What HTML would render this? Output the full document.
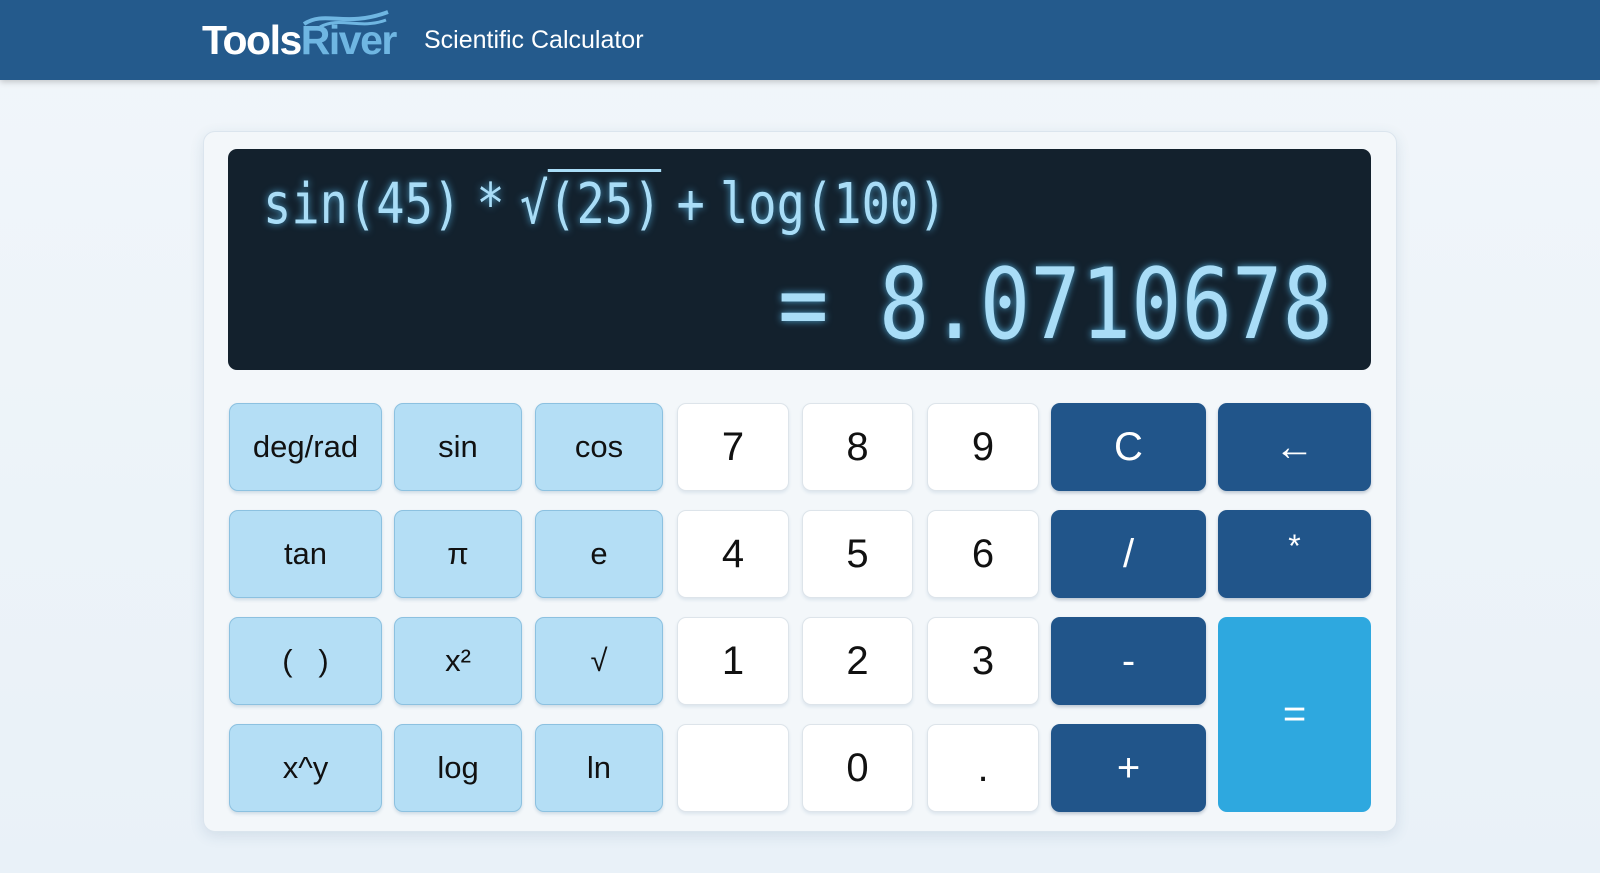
<!DOCTYPE html>
<html><head><meta charset="utf-8"><style>
*{margin:0;padding:0;box-sizing:border-box}
body{width:1600px;height:873px;overflow:hidden;background:linear-gradient(180deg,#f1f6fa,#e9f1f8);font-family:"Liberation Sans",sans-serif;position:relative}
.hdr{position:absolute;left:0;top:0;width:1600px;height:80px;background:#245a8c;box-shadow:0 2px 6px rgba(0,0,0,.2)}
.logo{position:absolute;left:202px;top:17px;font-size:41px;font-weight:bold;letter-spacing:-1.5px;color:#fff}
.logo span{color:#6fb6e2}
.sub{position:absolute;left:424px;top:26px;font-size:25px;color:#fff}
.panel{position:absolute;left:203px;top:131px;width:1194px;height:701px;background:#f3f7fa;border:1px solid #dbe5ee;border-radius:12px;box-shadow:0 4px 14px rgba(40,80,120,.12)}
.disp{position:absolute;left:228px;top:149px;width:1143px;height:221px;background:#13212d;border-radius:9px}
.mono{font-family:"DejaVu Sans Mono","Liberation Mono",monospace;color:#a9ddf7;text-shadow:0 0 8px rgba(90,190,240,.8);position:absolute;white-space:pre;transform-origin:left top}
.expr{left:263px;top:172px;font-size:56px;transform:scaleX(.84)}
.expr i{font-style:normal;display:inline-block;margin:0 18px}
.expr u{text-decoration:none;border-top:3px solid #a9ddf7}
.res{left:778px;top:248px;font-size:98px;transform:scaleX(.855)}
.b{position:absolute;height:88px;border-radius:9px;display:flex;align-items:center;justify-content:center;font-size:31px;color:#111}
.l{background:#b4def5;border:1px solid #8cc1e0;box-shadow:0 2px 3px rgba(60,110,150,.2)}
.w{background:#fff;border:1px solid #dde4ea;font-size:40px;box-shadow:0 2px 3px rgba(60,110,150,.12)}
.d{background:#21558a;color:#fff;font-size:40px;box-shadow:0 2px 3px rgba(20,50,90,.25)}
.e{background:#2ea8df;color:#fff;font-size:40px}
</style></head><body>
<div class="hdr">
<svg style="position:absolute;left:300px;top:8px" width="92" height="22" viewBox="0 0 92 22"><path d="M4 16 C25 2 45 20 88 4" stroke="#6fb6e2" stroke-width="4" fill="none"/><path d="M20 19 C40 8 60 22 86 12" stroke="#6fb6e2" stroke-width="3" fill="none"/></svg>
<div class="logo">Tools<span>River</span></div>
<div class="sub">Scientific Calculator</div>
</div>
<div class="panel"></div>
<div class="disp"></div>
<div class="mono expr">sin(45)<i>*</i>√<u>(25)</u><i>+</i>log(100)</div>
<div class="mono res">= 8.0710678</div>

<div class="b l" style="left:229px;top:403px;width:153px">deg/rad</div>
<div class="b l" style="left:394px;top:403px;width:128px">sin</div>
<div class="b l" style="left:535px;top:403px;width:128px">cos</div>
<div class="b w" style="left:677px;top:403px;width:112px">7</div>
<div class="b w" style="left:802px;top:403px;width:111px">8</div>
<div class="b w" style="left:927px;top:403px;width:112px">9</div>
<div class="b d" style="left:1051px;top:403px;width:155px">C</div>
<div class="b d" style="left:1218px;top:403px;width:153px">←</div>

<div class="b l" style="left:229px;top:510px;width:153px">tan</div>
<div class="b l" style="left:394px;top:510px;width:128px">π</div>
<div class="b l" style="left:535px;top:510px;width:128px">e</div>
<div class="b w" style="left:677px;top:510px;width:112px">4</div>
<div class="b w" style="left:802px;top:510px;width:111px">5</div>
<div class="b w" style="left:927px;top:510px;width:112px">6</div>
<div class="b d" style="left:1051px;top:510px;width:155px">/</div>
<div class="b d" style="left:1218px;top:510px;width:153px;align-items:flex-start;padding-top:18px;font-size:32px">*</div>

<div class="b l" style="left:229px;top:617px;width:153px">(&nbsp;&nbsp;&nbsp;)</div>
<div class="b l" style="left:394px;top:617px;width:128px">x²</div>
<div class="b l" style="left:535px;top:617px;width:128px">√</div>
<div class="b w" style="left:677px;top:617px;width:112px">1</div>
<div class="b w" style="left:802px;top:617px;width:111px">2</div>
<div class="b w" style="left:927px;top:617px;width:112px">3</div>
<div class="b d" style="left:1051px;top:617px;width:155px">-</div>
<div class="b e" style="left:1218px;top:617px;width:153px;height:195px">=</div>

<div class="b l" style="left:229px;top:724px;width:153px">x^y</div>
<div class="b l" style="left:394px;top:724px;width:128px">log</div>
<div class="b l" style="left:535px;top:724px;width:128px">ln</div>
<div class="b w" style="left:677px;top:724px;width:112px"></div>
<div class="b w" style="left:802px;top:724px;width:111px">0</div>
<div class="b w" style="left:927px;top:724px;width:112px">.</div>
<div class="b d" style="left:1051px;top:724px;width:155px">+</div>
</body></html>
